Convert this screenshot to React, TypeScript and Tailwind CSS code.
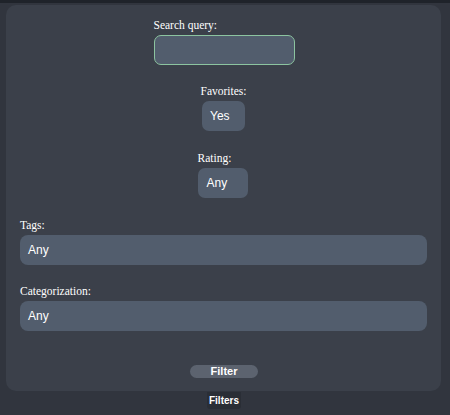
import React from "react";

const serif = { fontFamily: '"Liberation Serif", "Times New Roman", serif' };
const sans = { fontFamily: '"Liberation Sans", Arial, sans-serif' };

interface IField {
  label: string;
  value?: string;
  box: string;
  wrap: string;
}

const Field = ({ label, value, box, wrap }: IField) => (
  <div className={wrap}>
    <p className="text-[11.5px] leading-[13px] mb-[3px] text-white" style={serif}>
      {label}
    </p>
    <div
      className={`h-[30px] flex items-center bg-[#525d6d] text-[12px] text-white ${box}`}
      style={sans}
    >
      {value}
    </div>
  </div>
);

const App = () => {
  return (
    <div className="w-[450px] h-[415px] bg-[#31353e] overflow-hidden flex flex-col">
      <div className="h-[3px] bg-[#1f232a]" />
      <div className="ml-[6px] mt-[2px] w-[435px] h-[386px] rounded-[10px] bg-[#3b404a] px-[14px] pt-[14px] flex flex-col">
        <div className="flex flex-col self-center ml-[1px]">
          <p className="text-[11.5px] leading-[13px] mb-[3px] text-white" style={serif}>
            Search query:
          </p>
          <div className="w-[141px] h-[30px] rounded-[7px] bg-[#525d6d] border border-[#8cc4a0]" />
        </div>

        <Field
          label="Favorites:"
          value="Yes"
          wrap="mt-[20px] self-center flex flex-col items-center"
          box="w-[43px] rounded-[7px] pl-[8px]"
        />
        <Field
          label="Rating:"
          value="Any"
          wrap="mt-[21px] self-center flex flex-col items-start ml-[-2px]"
          box="w-[50px] rounded-[7px] pl-[9px]"
        />
        <Field
          label="Tags:"
          value="Any"
          wrap="mt-[21px] flex flex-col"
          box="w-full rounded-[8px] pl-[8px]"
        />
        <Field
          label="Categorization:"
          value="Any"
          wrap="mt-[20px] flex flex-col"
          box="w-full rounded-[8px] pl-[8px]"
        />

        <button
          className="mt-[34px] self-center w-[68px] h-[13px] rounded-full bg-[#5c636f] text-white text-[11px] font-bold leading-[13px] ml-[1px]"
          style={sans}
        >
          Filter
        </button>
      </div>

      <div className="flex-1 flex flex-col">
        <div
          className="self-center ml-[-2px] mt-[1px] px-[2px] h-[17px] rounded-b-[3px] bg-[#2a2e36] text-white text-[10px] font-bold leading-[17px]"
          style={sans}
        >
          Filters
        </div>
      </div>
    </div>
  );
};

export default App;
